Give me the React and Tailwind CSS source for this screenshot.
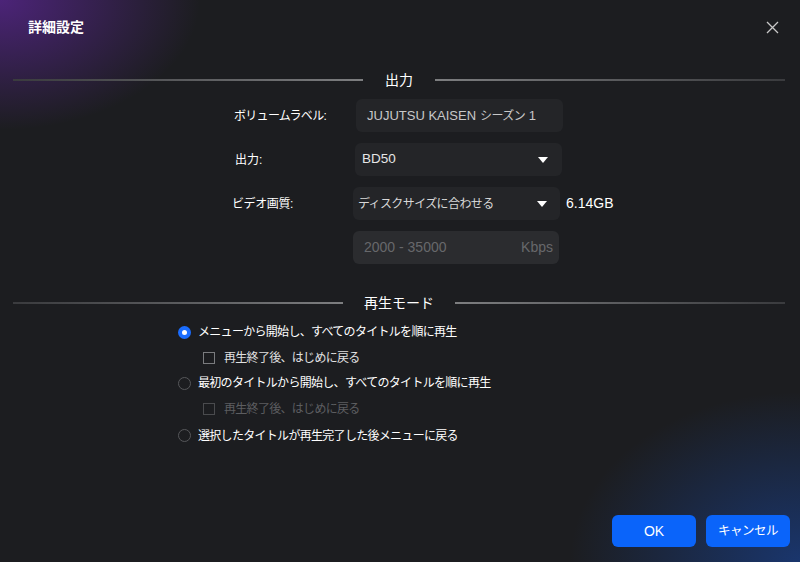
import React, { useState } from 'react';

const font = { fontFamily: '"Liberation Sans", "Noto Sans CJK JP", sans-serif' };

function SectionTitle({ label, leftW, rightW }) {
  return (
    <div className="flex items-center h-5">
      <div className="h-[2px] ml-[13px] bg-gradient-to-r from-[#3a3b3e] to-[#7d7e80]" style={{ width: leftW }} />
      <div className="flex-1 text-center text-[14px] text-white">{label}</div>
      <div className="h-[2px] mr-[15px] bg-gradient-to-r from-[#7d7e80] to-[#3a3b3e]" style={{ width: rightW }} />
    </div>
  );
}

function Caret() {
  return (
    <svg width="10" height="6" viewBox="0 0 10 6">
      <path d="M0 0h10L5 6z" fill="#ffffff" />
    </svg>
  );
}

function Radio({ checked }) {
  return (
    <span className={'w-[13px] h-[13px] rounded-full flex items-center justify-center shrink-0 ' + (checked ? 'bg-[#1a6dff]' : 'border border-[#56575a]')}>
      {checked && <span className="w-[5px] h-[5px] rounded-full bg-white" />}
    </span>
  );
}

function Check({ dim }) {
  return <span className={'w-[12px] h-[12px] border shrink-0 ' + (dim ? 'border-[#4a4b4e]' : 'border-[#7a7b7e]')} />;
}

export default function App() {
  const [mode, setMode] = useState(0);

  return (
    <div
      className="w-[800px] h-[562px] relative overflow-hidden bg-[#1c1d20] text-[13px] text-[#e6e6e6] flex flex-col"
      style={font}
    >
      <div className="absolute inset-0 pointer-events-none bg-[radial-gradient(ellipse_200px_130px_at_0%_0%,rgba(92,38,150,0.75),rgba(92,38,150,0)_100%)]" />
      <div className="absolute inset-0 pointer-events-none bg-[radial-gradient(ellipse_230px_170px_at_100%_100%,rgba(24,70,160,0.6),rgba(24,70,160,0)_100%)]" />

      <div className="relative flex items-center justify-between pl-[28px] pr-[21px] pt-[17px] h-[38px]">
        <span className="text-[14px] font-bold text-white">詳細設定</span>
        <svg width="13" height="13" viewBox="0 0 13 13" stroke="#c8c8c8" strokeWidth="1.3">
          <path d="M1 1l11 11M12 1L1 12" />
        </svg>
      </div>

      <div className="relative mt-[32px]">
        <SectionTitle label="出力" leftW={350} rightW={350} />
      </div>

      <div className="relative flex flex-col gap-[11px] mt-[9px]">
        <div className="flex items-center h-[33px]">
          <span className="w-[122px] ml-[234px] text-white text-[12px] tracking-[-0.7px]">ボリュームラベル:</span>
          <div className="w-[207px] h-full rounded-md bg-[#242528] flex items-center px-[11px] text-[#c8c8c8] text-[13px]">
            JUJUTSU KAISEN <span className="text-[12px] tracking-[-0.6px] ml-[4px]">シーズン</span>&nbsp;1
          </div>
        </div>
        <div className="flex items-center h-[33px]">
          <span className="w-[120px] ml-[235px] text-white text-[12px]">出力:</span>
          <div className="w-[207px] h-full rounded-md bg-[#242528] flex items-center justify-between pl-[7px] pr-[14px] text-[#e6e6e6] text-[13.5px]">
            <span>BD50</span>
            <Caret />
          </div>
        </div>
        <div className="flex items-center h-[33px]">
          <span className="w-[121px] ml-[232px] text-white text-[12px] tracking-[-0.4px]">ビデオ画質:</span>
          <div className="w-[207px] h-full rounded-md bg-[#242528] flex items-center justify-between pl-[5px] pr-[13px] text-[#d8d8d8]">
            <span className="text-[12px] tracking-[-0.6px]">ディスクサイズに合わせる</span>
            <Caret />
          </div>
          <span className="ml-[6px] text-white text-[14px]">6.14GB</span>
        </div>
        <div className="flex items-center h-[33px]">
          <div className="ml-[353px] w-[206px] h-full rounded-md bg-[#2b2c2f] flex items-center justify-between pl-[11px] pr-[6px] text-[#67686b] text-[14px]">
            <span>2000 - 35000</span>
            <span>Kbps</span>
          </div>
        </div>
      </div>

      <div className="relative mt-[29px]">
        <SectionTitle label="再生モード" leftW={330} rightW={330} />
      </div>

      <div className="relative flex flex-col mt-[6px] pl-[178px] text-[12px] tracking-[-0.7px]">
        <label className="flex items-center gap-[7px] h-[26px] cursor-pointer" onClick={() => setMode(0)}>
          <Radio checked={mode === 0} />
          <span className="text-white">メニューから開始し、すべてのタイトルを順に再生</span>
        </label>
        <div className="flex items-center gap-[9px] h-[25px] pl-[25px]">
          <Check />
          <span className="text-[#e0e0e0]">再生終了後、はじめに戻る</span>
        </div>
        <label className="flex items-center gap-[7px] h-[26px] cursor-pointer" onClick={() => setMode(1)}>
          <Radio checked={mode === 1} />
          <span className="text-white">最初のタイトルから開始し、すべてのタイトルを順に再生</span>
        </label>
        <div className="flex items-center gap-[9px] h-[26px] pl-[25px]">
          <Check dim />
          <span className="text-[#5c5d60]">再生終了後、はじめに戻る</span>
        </div>
        <label className="flex items-center gap-[7px] h-[27px] cursor-pointer" onClick={() => setMode(2)}>
          <Radio checked={mode === 2} />
          <span className="text-white">選択したタイトルが再生完了した後メニューに戻る</span>
        </label>
      </div>

      <div className="relative mt-auto mb-[15px] mr-[10px] flex justify-end gap-[10px]">
        <button className="w-[84px] h-[32px] rounded-md bg-[#0a64fa] text-white text-[14px]">OK</button>
        <button className="w-[84px] h-[32px] rounded-md bg-[#0a64fa] text-white text-[12.5px] tracking-[-0.5px]">キャンセル</button>
      </div>
    </div>
  );
}
